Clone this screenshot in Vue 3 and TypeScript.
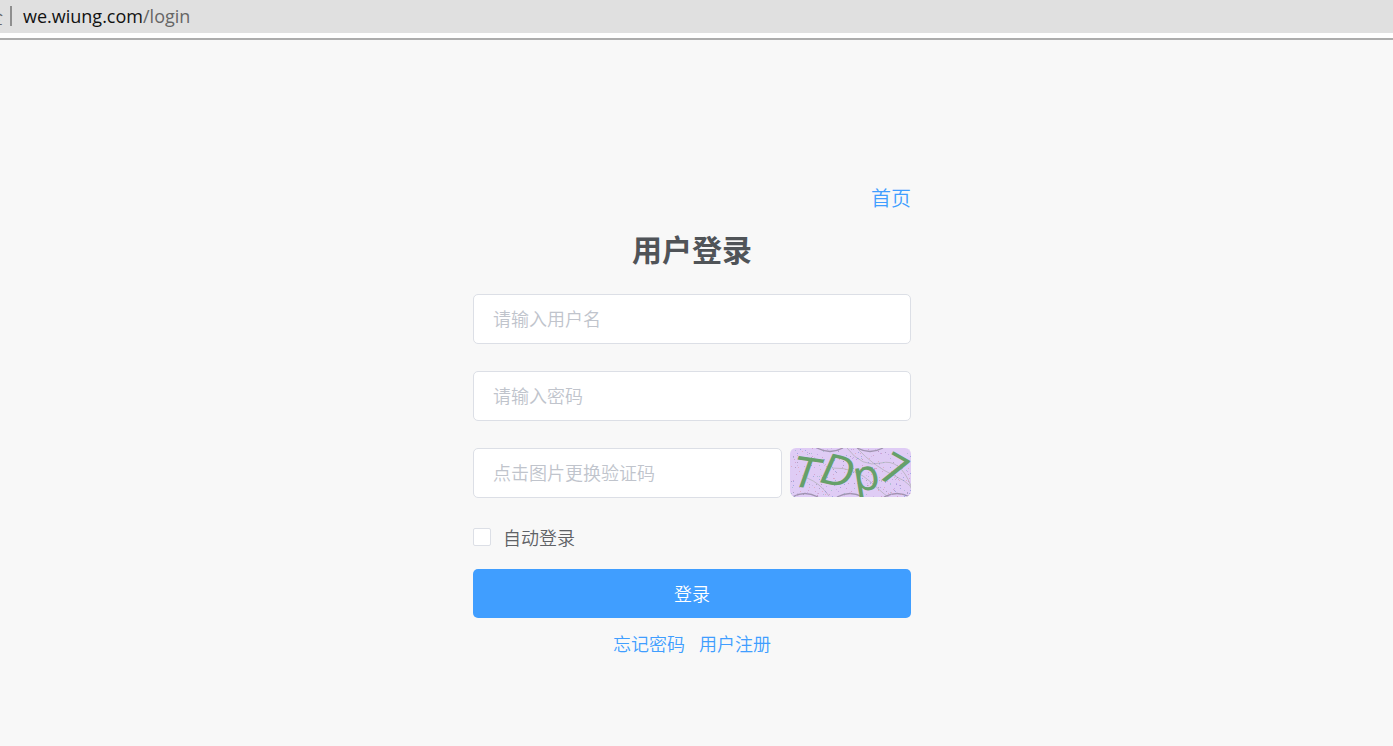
<script setup lang="ts">
import { ref } from 'vue'

interface Dot {
  x: number
  y: number
  color: string
}

const username = ref('')
const password = ref('')
const captcha = ref('')
const autoLogin = ref(false)

const dotColors = ['#7f8fd8', '#c98bb8', '#8fb8c0', '#b28fe0', '#e09aa8', '#8f86a8', '#c4a8d8']

function makeDots(seedStart: number): Dot[] {
  let seed = seedStart
  const next = (): number => {
    seed = (seed * 16807) % 2147483647
    return seed / 2147483647
  }
  return Array.from({ length: 300 }, () => ({
    x: Math.floor(next() * 121),
    y: Math.floor(next() * 49),
    color: dotColors[Math.floor(next() * dotColors.length)],
  }))
}

const dots = ref<Dot[]>(makeDots(4211))

function refreshCaptcha(): void {
  dots.value = makeDots(Math.floor(Math.random() * 100000) + 1)
}
</script>

<template>
  <div class="page">
    <header class="address">
      <span class="secure"><span>全</span></span>
      <span class="divider"></span>
      <span class="url">we.wiung.com<span class="path">/login</span></span>
    </header>
    <main class="content">
      <form class="login" @submit.prevent>
        <a class="home" href="#">首页</a>
        <h1>用户登录</h1>
        <input v-model="username" class="field" type="text" placeholder="请输入用户名" aria-label="用户名" />
        <input v-model="password" class="field" type="password" placeholder="请输入密码" aria-label="密码" />
        <div class="captcha-row">
          <input v-model="captcha" class="field" type="text" placeholder="点击图片更换验证码" aria-label="验证码" />
          <button class="captcha" type="button" aria-label="更换验证码" @click="refreshCaptcha">
            <svg viewBox="0 0 121 49" width="121" height="49">
              <rect width="121" height="49" fill="#dfccf5" />
              <g fill="none" stroke="#bdb6c6" stroke-width="1">
                <path d="M17 30Q30 35 39 48M42 20Q65 19 82 35T98 48M57 0Q72 20 91 15T121 38M67 0Q83 18 105 28T121 47" />
              </g>
              <g fill="none" stroke="#a094b0" stroke-width="1.4">
                <path d="M27 0Q40 7 53 0M67 0Q80 7 93 0M2 49Q15 42 28 49M47 49Q60 42 73 49M94 49Q107 42 120 49" />
              </g>
              <rect
                v-for="(dot, index) in dots"
                :key="index"
                :x="dot.x"
                :y="dot.y"
                width="1"
                height="1"
                :fill="dot.color"
                opacity=".6"
              />
              <g class="code">
                <text class="slanted" transform="translate(2 38) rotate(8)">T</text>
                <text class="slanted" transform="translate(29 34) rotate(13)">D</text>
                <text transform="translate(65 44) rotate(-9)">p</text>
                <text transform="translate(85 28) rotate(30)">7</text>
              </g>
            </svg>
          </button>
        </div>
        <label class="remember">
          <input v-model="autoLogin" type="checkbox" />
          <span>自动登录</span>
        </label>
        <button class="submit" type="submit">登录</button>
        <nav class="links">
          <a href="#">忘记密码</a>
          <a href="#">用户注册</a>
        </nav>
      </form>
    </main>
  </div>
</template>

<style>
body {
  margin: 0;
  background: #f8f8f8;
}
</style>

<style scoped>
.page {
  min-height: 100vh;
  box-sizing: border-box;
  background: #f8f8f8;
  color: #606266;
  font-family: "Noto Sans CJK SC", sans-serif;
  font-size: 18px;
  font-weight: 350;
  line-height: 24px;
}

.address {
  display: flex;
  align-items: center;
  box-sizing: border-box;
  height: 38px;
  padding-bottom: 2px;
  background: #e0e0e0;
  border-bottom: 5px solid #fff;
  box-shadow: 0 2px 0 #adadad;
}

.secure {
  display: flex;
  justify-content: flex-end;
  width: 3px;
  overflow: hidden;
  color: #666;
}

.divider {
  width: 2px;
  height: 20px;
  margin: 0 11px 0 7px;
  background: #8e8e8e;
}

.url {
  color: #111;
  font-family: "Open Sans", sans-serif;
  font-weight: 400;
}

.path {
  color: #666;
}

.content {
  display: flex;
  justify-content: center;
  padding: 148px 9px 24px 0;
}

.login {
  display: flex;
  flex-direction: column;
  width: 438px;
}

a {
  color: #409eff;
  text-decoration: none;
}

.home {
  align-self: flex-end;
  font-size: 20px;
}

h1 {
  margin: 18px 0 26px;
  color: #505458;
  font-size: 30px;
  font-weight: 700;
  line-height: 40px;
  text-align: center;
}

.field {
  box-sizing: border-box;
  width: 100%;
  height: 50px;
  margin: 0 0 27px;
  padding: 0 19px 2px;
  border: 1px solid #dcdfe6;
  border-radius: 5px;
  background: #fff;
  color: #606266;
  font: inherit;
}

.field::placeholder {
  color: #c0c4cc;
  opacity: 1;
}

.captcha-row {
  display: flex;
  gap: 8px;
}

.captcha-row .field {
  flex: 1;
  min-width: 0;
}

.captcha {
  flex: none;
  height: 49px;
  padding: 0;
  border: 0;
  border-radius: 6px;
  overflow: hidden;
  background: none;
  cursor: pointer;
}

.captcha svg {
  display: block;
}

.code {
  fill: #66a06a;
  font-family: "DejaVu Sans", sans-serif;
  font-size: 42px;
  font-weight: 400;
}

.slanted {
  font-style: italic;
}

.remember {
  display: flex;
  align-items: center;
  align-self: flex-start;
  gap: 12px;
  margin-bottom: 20px;
}

.remember input {
  appearance: none;
  box-sizing: border-box;
  width: 18px;
  height: 18px;
  margin: 0;
  border: 1px solid #dcdfe6;
  border-radius: 2px;
  background: #fff;
}

.remember input:checked {
  border-color: #409eff;
  background: #409eff;
}

.submit {
  height: 49px;
  padding: 0 0 2px;
  border: 0;
  border-radius: 5px;
  background: #409eff;
  color: #fff;
  font: inherit;
  cursor: pointer;
}

.links {
  display: flex;
  justify-content: center;
  gap: 14px;
  margin-top: 13px;
}
</style>
